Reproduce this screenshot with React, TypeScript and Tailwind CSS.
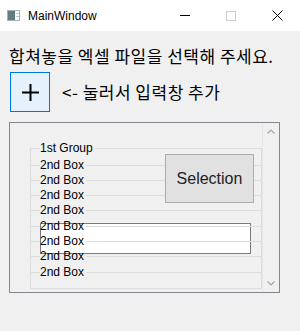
import React from "react";

const rows = [
  { label: "1st Group", h: "h-[17px]", first: true },
  { label: "2nd Box", h: "h-[15px]" },
  { label: "2nd Box", h: "h-[15px]" },
  { label: "2nd Box", h: "h-[15px]" },
  { label: "2nd Box", h: "h-[16px]" },
  { label: "2nd Box", h: "h-[15px]" },
  { label: "2nd Box", h: "h-[15px]" },
  { label: "2nd Box", h: "h-[16px]" },
  { label: "2nd Box", h: "h-[16px]" },
];

function GroupRow({ label, h, first }: { label: string; h: string; first?: boolean }) {
  return (
    <div className={`flex ${h}`}>
      <div className="flex w-[10px] flex-col">
        <div className={`h-[7px] ${first ? "" : "border-l border-[#dcdcdc]"}`}></div>
        <div className="h-px bg-[#dcdcdc]"></div>
        <div className="flex-1 border-l border-[#dcdcdc]"></div>
      </div>
      <span className="whitespace-nowrap pr-[2px] text-[12px] leading-[15px] text-black">{label}</span>
      <div className="flex flex-1 flex-col">
        <div className={`h-[7px] ${first ? "" : "border-r border-[#dcdcdc]"}`}></div>
        <div className="h-px bg-[#dcdcdc]"></div>
        <div className="flex-1 border-r border-[#dcdcdc]"></div>
      </div>
    </div>
  );
}

export default function App() {
  return (
    <div className="flex h-[331px] w-[300px] flex-col overflow-hidden bg-[#f0f0f0] font-['Liberation_Sans',sans-serif]">
      {/* title bar */}
      <div className="flex h-[31px] shrink-0 items-center bg-white">
        <svg className="ml-[7px]" width="13" height="11" viewBox="0 0 13 11">
          <rect x="0.5" y="0.5" width="12" height="10" fill="#fff" stroke="#a9b0b4" />
          <rect x="1" y="1" width="7" height="9" fill="#5f7f7c" />
          <rect x="9" y="3" width="3" height="1" fill="#c8cdd0" />
          <rect x="9" y="6" width="3" height="1" fill="#c8cdd0" />
        </svg>
        <span className="ml-[8px] text-[12px] text-black">MainWindow</span>
        <div className="ml-auto flex h-full items-center">
          <div className="flex w-[46px] items-center justify-center">
            <div className="h-px w-[10px] bg-black"></div>
          </div>
          <div className="flex w-[46px] items-center justify-center">
            <div className="h-[10px] w-[10px] border border-[#cccccc]"></div>
          </div>
          <div className="flex w-[46px] items-center justify-center">
            <svg width="11" height="11" viewBox="0 0 11 11">
              <path d="M0.5 0.5 L10.5 10.5 M10.5 0.5 L0.5 10.5" stroke="#000" strokeWidth="1" />
            </svg>
          </div>
        </div>
      </div>

      {/* label */}
      <div className="mt-[14px] pl-[9px] font-['Noto_Sans_CJK_KR',sans-serif] text-[17px] leading-[22px] tracking-[0.5px] text-black">
        합쳐놓을 엑셀 파일을 선택해 주세요.
      </div>

      {/* add row */}
      <div className="mt-[5px] flex items-center pl-[10px]">
        <button className="flex h-[40px] w-[40px] items-center justify-center border border-[#0078d7] bg-[#e5f1fb]">
          <svg width="17" height="17" viewBox="0 0 17 17">
            <path d="M8.5 0 V17 M0 8.5 H17" stroke="#000" strokeWidth="2" />
          </svg>
        </button>
        <span className="ml-[12px] font-['Noto_Sans_CJK_KR',sans-serif] text-[17px] leading-[22px] tracking-[0.5px] text-black">
          &lt;- 눌러서 입력창 추가
        </span>
      </div>

      {/* scroll area */}
      <div className="ml-[9px] mt-[10px] flex h-[171px] w-[271px] border border-[#828790]">
        <div className="relative flex-1 overflow-hidden pl-[20px] pt-[18px]">
          <div className="absolute left-[30px] top-[100px] h-[31px] w-[211px] border border-[#7a7a7a] bg-white"></div>
          <div className="relative flex flex-col">
            {rows.map((r, i) => (
              <GroupRow key={i} label={r.label} h={r.h} first={r.first} />
            ))}
            <div className="h-[8px] border-b border-l border-r border-[#dcdcdc]"></div>
          </div>
          <button className="absolute left-[155px] top-[31px] flex h-[49px] w-[89px] items-center justify-center border border-[#adadad] bg-[#e1e1e1] text-[16px] text-[#222222]">
            Selection
          </button>
        </div>
        <div className="flex w-[17px] flex-col items-center justify-between border-l border-[#e6e6e6] py-[6px]">
          <svg width="8" height="5" viewBox="0 0 8 5">
            <path d="M0.5 4.5 L4 1 L7.5 4.5" fill="none" stroke="#a6a6a6" strokeWidth="1.2" />
          </svg>
          <svg width="8" height="5" viewBox="0 0 8 5">
            <path d="M0.5 0.5 L4 4 L7.5 0.5" fill="none" stroke="#a6a6a6" strokeWidth="1.2" />
          </svg>
        </div>
      </div>
    </div>
  );
}
